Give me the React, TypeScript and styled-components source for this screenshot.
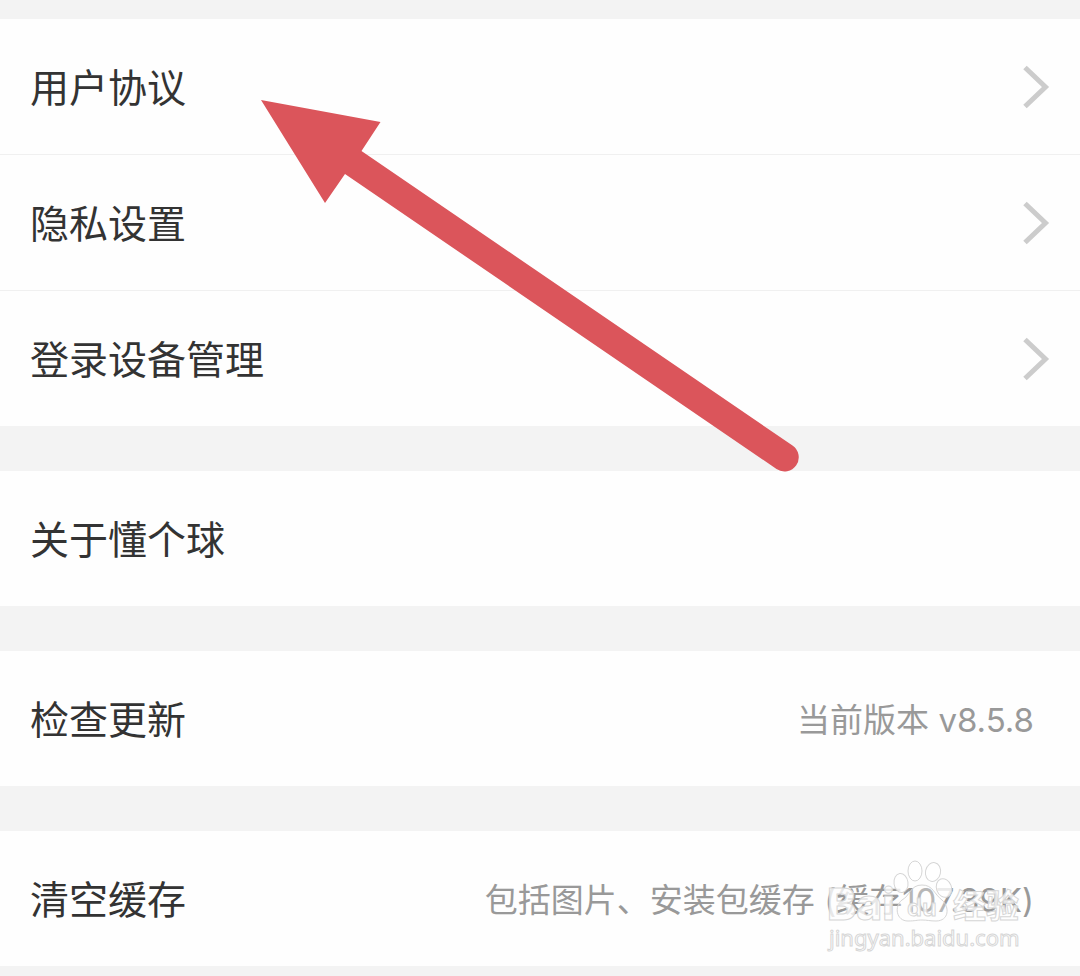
import React from "react";
import styled, { createGlobalStyle } from "styled-components";

const GlobalStyle = createGlobalStyle`
  *, *::before, *::after { box-sizing: border-box; }
  body {
    margin: 0;
    background: #f3f3f3;
    color: #333333;
    font-family: Inter, "Noto Sans CJK SC", sans-serif;
  }
`;

const Page = styled.main`
  position: relative;
  display: flex;
  flex-direction: column;
  gap: 45px;
  padding: 19px 0 10px;
  overflow: hidden;
`;

const Group = styled.ul`
  list-style: none;
  margin: 0;
  padding: 0;
  background: #fefefe;
`;

const Item = styled.li`
  & + & {
    border-top: 1px solid #f0f0f0;
  }
`;

const Row = styled.button`
  display: flex;
  align-items: center;
  justify-content: space-between;
  width: 100%;
  height: 135px;
  padding: 0 30px;
  border: 0;
  background: transparent;
  color: inherit;
  font: inherit;
  text-align: left;
  cursor: pointer;
`;

const Label = styled.span`
  padding-top: 2px;
  font-size: 39px;
  line-height: 56px;
`;

const Value = styled.span`
  padding-top: 2px;
  padding-right: 16px;
  color: #999999;
  font-size: 33px;
  line-height: 48px;
  white-space: nowrap;
`;

const Chevron = styled.svg`
  width: 28px;
  height: 44px;
  fill: none;
  stroke: #cccccc;
  stroke-width: 5;
`;

const Arrow = styled.svg`
  position: absolute;
  top: 100px;
  left: 261px;
  width: 538px;
  height: 372px;
  fill: #db555b;
  pointer-events: none;
`;

const Watermark = styled.svg`
  position: absolute;
  right: 52px;
  bottom: 18px;
  width: 204px;
  height: 100px;
  fill: #ffffff;
  fill-opacity: 0.8;
  stroke: #d6d6d6;
  stroke-width: 1;
  pointer-events: none;
`;

type Entry = { label: string; value?: string; chevron?: boolean };

const groups: Entry[][] = [
  [
    { label: "用户协议", chevron: true },
    { label: "隐私设置", chevron: true },
    { label: "登录设备管理", chevron: true },
  ],
  [{ label: "关于懂个球" }],
  [{ label: "检查更新", value: "当前版本 v8.5.8" }],
  [{ label: "清空缓存", value: "包括图片、安装包缓存 (缓存107.39K)" }],
];

export default function App() {
  return (
    <>
      <GlobalStyle />
      <Page>
        {groups.map((entries) => (
          <Group key={entries[0].label}>
            {entries.map(({ label, value, chevron }) => (
              <Item key={label}>
                <Row type="button">
                  <Label>{label}</Label>
                  {value && <Value>{value}</Value>}
                  {chevron && (
                    <Chevron viewBox="0 0 28 44" aria-hidden="true">
                      <path d="M3 2.500 23.500 22 3 41.500" />
                    </Chevron>
                  )}
                </Row>
              </Item>
            ))}
          </Group>
        ))}
        <Arrow viewBox="0 0 538 372" aria-hidden="true">
          <path d="M0 0 119.500 22 100.500 51 531.500 345.500A14 14 0 0 1 515.500 369L84 74 64 103Z" />
        </Arrow>
        <Watermark viewBox="0 0 204 100" aria-hidden="true">
          <text x="3" y="62" fontFamily="Inter" fontWeight="800" fontSize="44">
            Bai
          </text>
          <ellipse cx="91" cy="13" rx="7" ry="10" />
          <ellipse cx="109" cy="14" rx="7.500" ry="9.500" transform="rotate(12 109 14)" />
          <ellipse cx="77" cy="25" rx="7" ry="9.500" transform="rotate(-8 77 25)" />
          <ellipse cx="120" cy="30" rx="7.500" ry="9.500" transform="rotate(-20 120 30)" />
          <path
            fillOpacity="0.3"
            d="M98 27C86 27 86 38 78 42C70 48 72 63 84 63C91 63 93 62 98 62C103 62 106 63 112 63C125 63 126 49 118 42C110 36 109 27 98 27Z"
          />
          <text x="83" y="58" fontFamily="Inter" fontWeight="600" fontSize="24">
            du
          </text>
          <text x="129" y="60" fontFamily="Noto Sans CJK SC" fontWeight="700" fontSize="33">
            经验
          </text>
          <text x="5" y="88" fontFamily="Noto Sans" fontWeight="400" fontSize="22">
            jingyan.baidu.com
          </text>
        </Watermark>
      </Page>
    </>
  );
}
